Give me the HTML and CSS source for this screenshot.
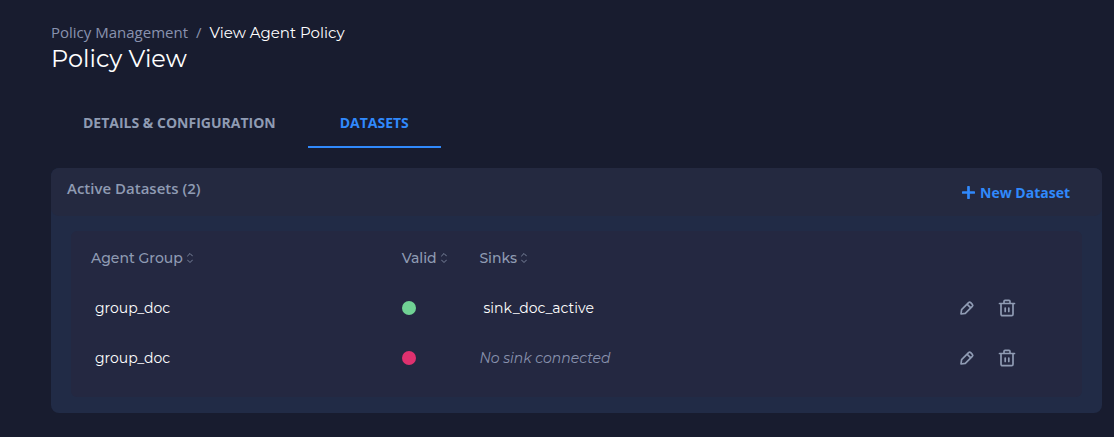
FILE: index.html
```
<!DOCTYPE html>
<html lang="en">
<head>
<meta charset="utf-8">
<title>Policy View</title>
<link rel="stylesheet" href="styles.css">
</head>
<body>
<svg class="sprite" aria-hidden="true">
  <symbol id="sort" viewBox="0 0 8 12"><path d="M1.500 4 4 1.500 6.500 4M1.500 8 4 10.500 6.500 8"/></symbol>
  <symbol id="pencil" viewBox="0 0 16 16"><path d="M2 14l.6-4.300L9.600 2.700a1.500 1.500 0 0 1 2.100 0l1.600 1.600a1.500 1.500 0 0 1 0 2.100L6.300 13.400zM8.200 4.300l3.500 3.500"/></symbol>
  <symbol id="trash" viewBox="0 0 18 18"><path d="M1.500 4.500h15M3 4.500v10.800a1.400 1.400 0 0 0 1.400 1.400h9.200a1.400 1.400 0 0 0 1.400-1.400V4.500M6 4.500V2.400A1 1 0 0 1 7 1.400h4a1 1 0 0 1 1 1v2.100M7.200 9v3.500M10.800 9v3.500"/></symbol>
</svg>
<main class="page">
  <nav class="breadcrumb" aria-label="Breadcrumb">
    <a class="crumb" href="#">Policy Management</a>
    <span class="separator">/</span>
    <span class="current">View Agent Policy</span>
  </nav>
  <h1 class="title">Policy View</h1>
  <div class="tabs" role="tablist">
    <button class="tab" role="tab" aria-selected="false">DETAILS &amp; CONFIGURATION</button>
    <button class="tab active" role="tab" aria-selected="true">DATASETS</button>
  </div>
  <section class="card">
    <header class="card-header">
      <h2 class="card-title">Active Datasets (2)</h2>
      <button class="new"><svg class="plus" viewBox="0 0 12 12"><path d="M6 1v10M1 6h10"/></svg>New Dataset</button>
    </header>
    <div class="card-body">
      <div class="panel">
        <table class="table">
          <colgroup><col class="col-group"><col class="col-valid"><col class="col-sinks"><col></colgroup>
          <thead>
            <tr>
              <th>Agent Group<svg class="sort"><use href="#sort"/></svg></th>
              <th>Valid<svg class="sort"><use href="#sort"/></svg></th>
              <th>Sinks<svg class="sort"><use href="#sort"/></svg></th>
              <td></td>
            </tr>
          </thead>
          <tbody>
            <tr>
              <td class="value">group_doc</td>
              <td><span class="dot valid" role="img" aria-label="Valid"></span></td>
              <td class="value">sink_doc_active</td>
              <td><div class="actions">
                <button class="action" aria-label="Edit"><svg class="pencil"><use href="#pencil"/></svg></button>
                <button class="action" aria-label="Delete"><svg class="trash"><use href="#trash"/></svg></button>
              </div></td>
            </tr>
            <tr>
              <td class="value">group_doc</td>
              <td><span class="dot invalid" role="img" aria-label="Invalid"></span></td>
              <td class="empty">No sink connected</td>
              <td><div class="actions">
                <button class="action" aria-label="Edit"><svg class="pencil"><use href="#pencil"/></svg></button>
                <button class="action" aria-label="Delete"><svg class="trash"><use href="#trash"/></svg></button>
              </div></td>
            </tr>
          </tbody>
        </table>
      </div>
    </div>
  </section>
</main>
</body>
</html>
```
FILE: styles.css
```
* { box-sizing: border-box; }
body {
  margin: 0;
  background: #181c2f;
  color: #fff;
  font: 14px/20px Montserrat, "Noto Sans", sans-serif;
}
button {
  border: 0;
  padding: 0;
  background: none;
  color: inherit;
  font: inherit;
  cursor: pointer;
}
svg {
  fill: none;
  stroke: currentColor;
  stroke-linecap: round;
  stroke-linejoin: round;
}
.sprite { display: none; }
.page { padding: 22px 12px 24px 51px; }
.breadcrumb {
  display: flex;
  align-items: baseline;
  gap: 8px;
  height: 21px;
  font-size: 15px;
}
.crumb, .separator {
  color: #8992ae;
  font-family: "Open Sans", sans-serif;
  text-decoration: none;
}
.title {
  margin: 0;
  font-size: 24px;
  line-height: 32px;
  font-weight: 400;
}
.tabs { display: flex; margin-top: 24px; }
.tab {
  padding: 14px 32px 13px;
  border-bottom: 2px solid transparent;
  color: #8f9bb3;
  font: 700 14px/20px "Open Sans", sans-serif;
}
.tab.active { border-color: #3089fc; color: #3089fc; }
.card {
  margin-top: 20px;
  border-radius: 8px;
  background: #212b46;
  overflow: hidden;
}
.card-header {
  display: flex;
  justify-content: space-between;
  align-items: flex-start;
  padding: 10px 32px 13px 16px;
  background: #242940;
  border-radius: 8px;
}
.card-title {
  margin: 0;
  color: #8f9bb3;
  font: 600 15px/20px "Open Sans", sans-serif;
}
.new {
  display: flex;
  align-items: center;
  gap: 5px;
  margin-top: 5px;
  color: #3089fc;
  font: 700 14px/20px "Open Sans", sans-serif;
}
.plus {
  width: 13px;
  height: 13px;
  margin-bottom: 2px;
  stroke-width: 2.500;
}
.card-body { padding: 15px 20px 16px; }
.panel {
  padding: 2px 20px 14px;
  border-radius: 6px;
  background: #242841;
}
.table {
  width: 100%;
  border-collapse: collapse;
  table-layout: fixed;
}
.col-group { width: 32%; }
.col-valid { width: 8%; }
.col-sinks { width: 49%; }
th, td {
  height: 50px;
  padding: 0;
  text-align: left;
  font-weight: 400;
}
th { color: #8f9bb3; font-weight: 500; }
.value { padding-left: 4px; }
.empty { color: #8992ae; font-style: italic; }
.sort {
  width: 8px;
  height: 12px;
  margin-left: 3px;
  vertical-align: -1px;
  opacity: .8;
}
.dot {
  display: block;
  width: 14px;
  height: 14px;
  border-radius: 50%;
}
.valid { background: #70d294; }
.invalid { background: #df316f; }
.actions { display: flex; gap: 23px; padding-left: 4px; }
.action { display: flex; align-items: center; color: #8f9bb3; }
.pencil { width: 16px; height: 16px; stroke-width: 1.700; }
.trash { width: 18px; height: 18px; stroke-width: 1.700; }
```
